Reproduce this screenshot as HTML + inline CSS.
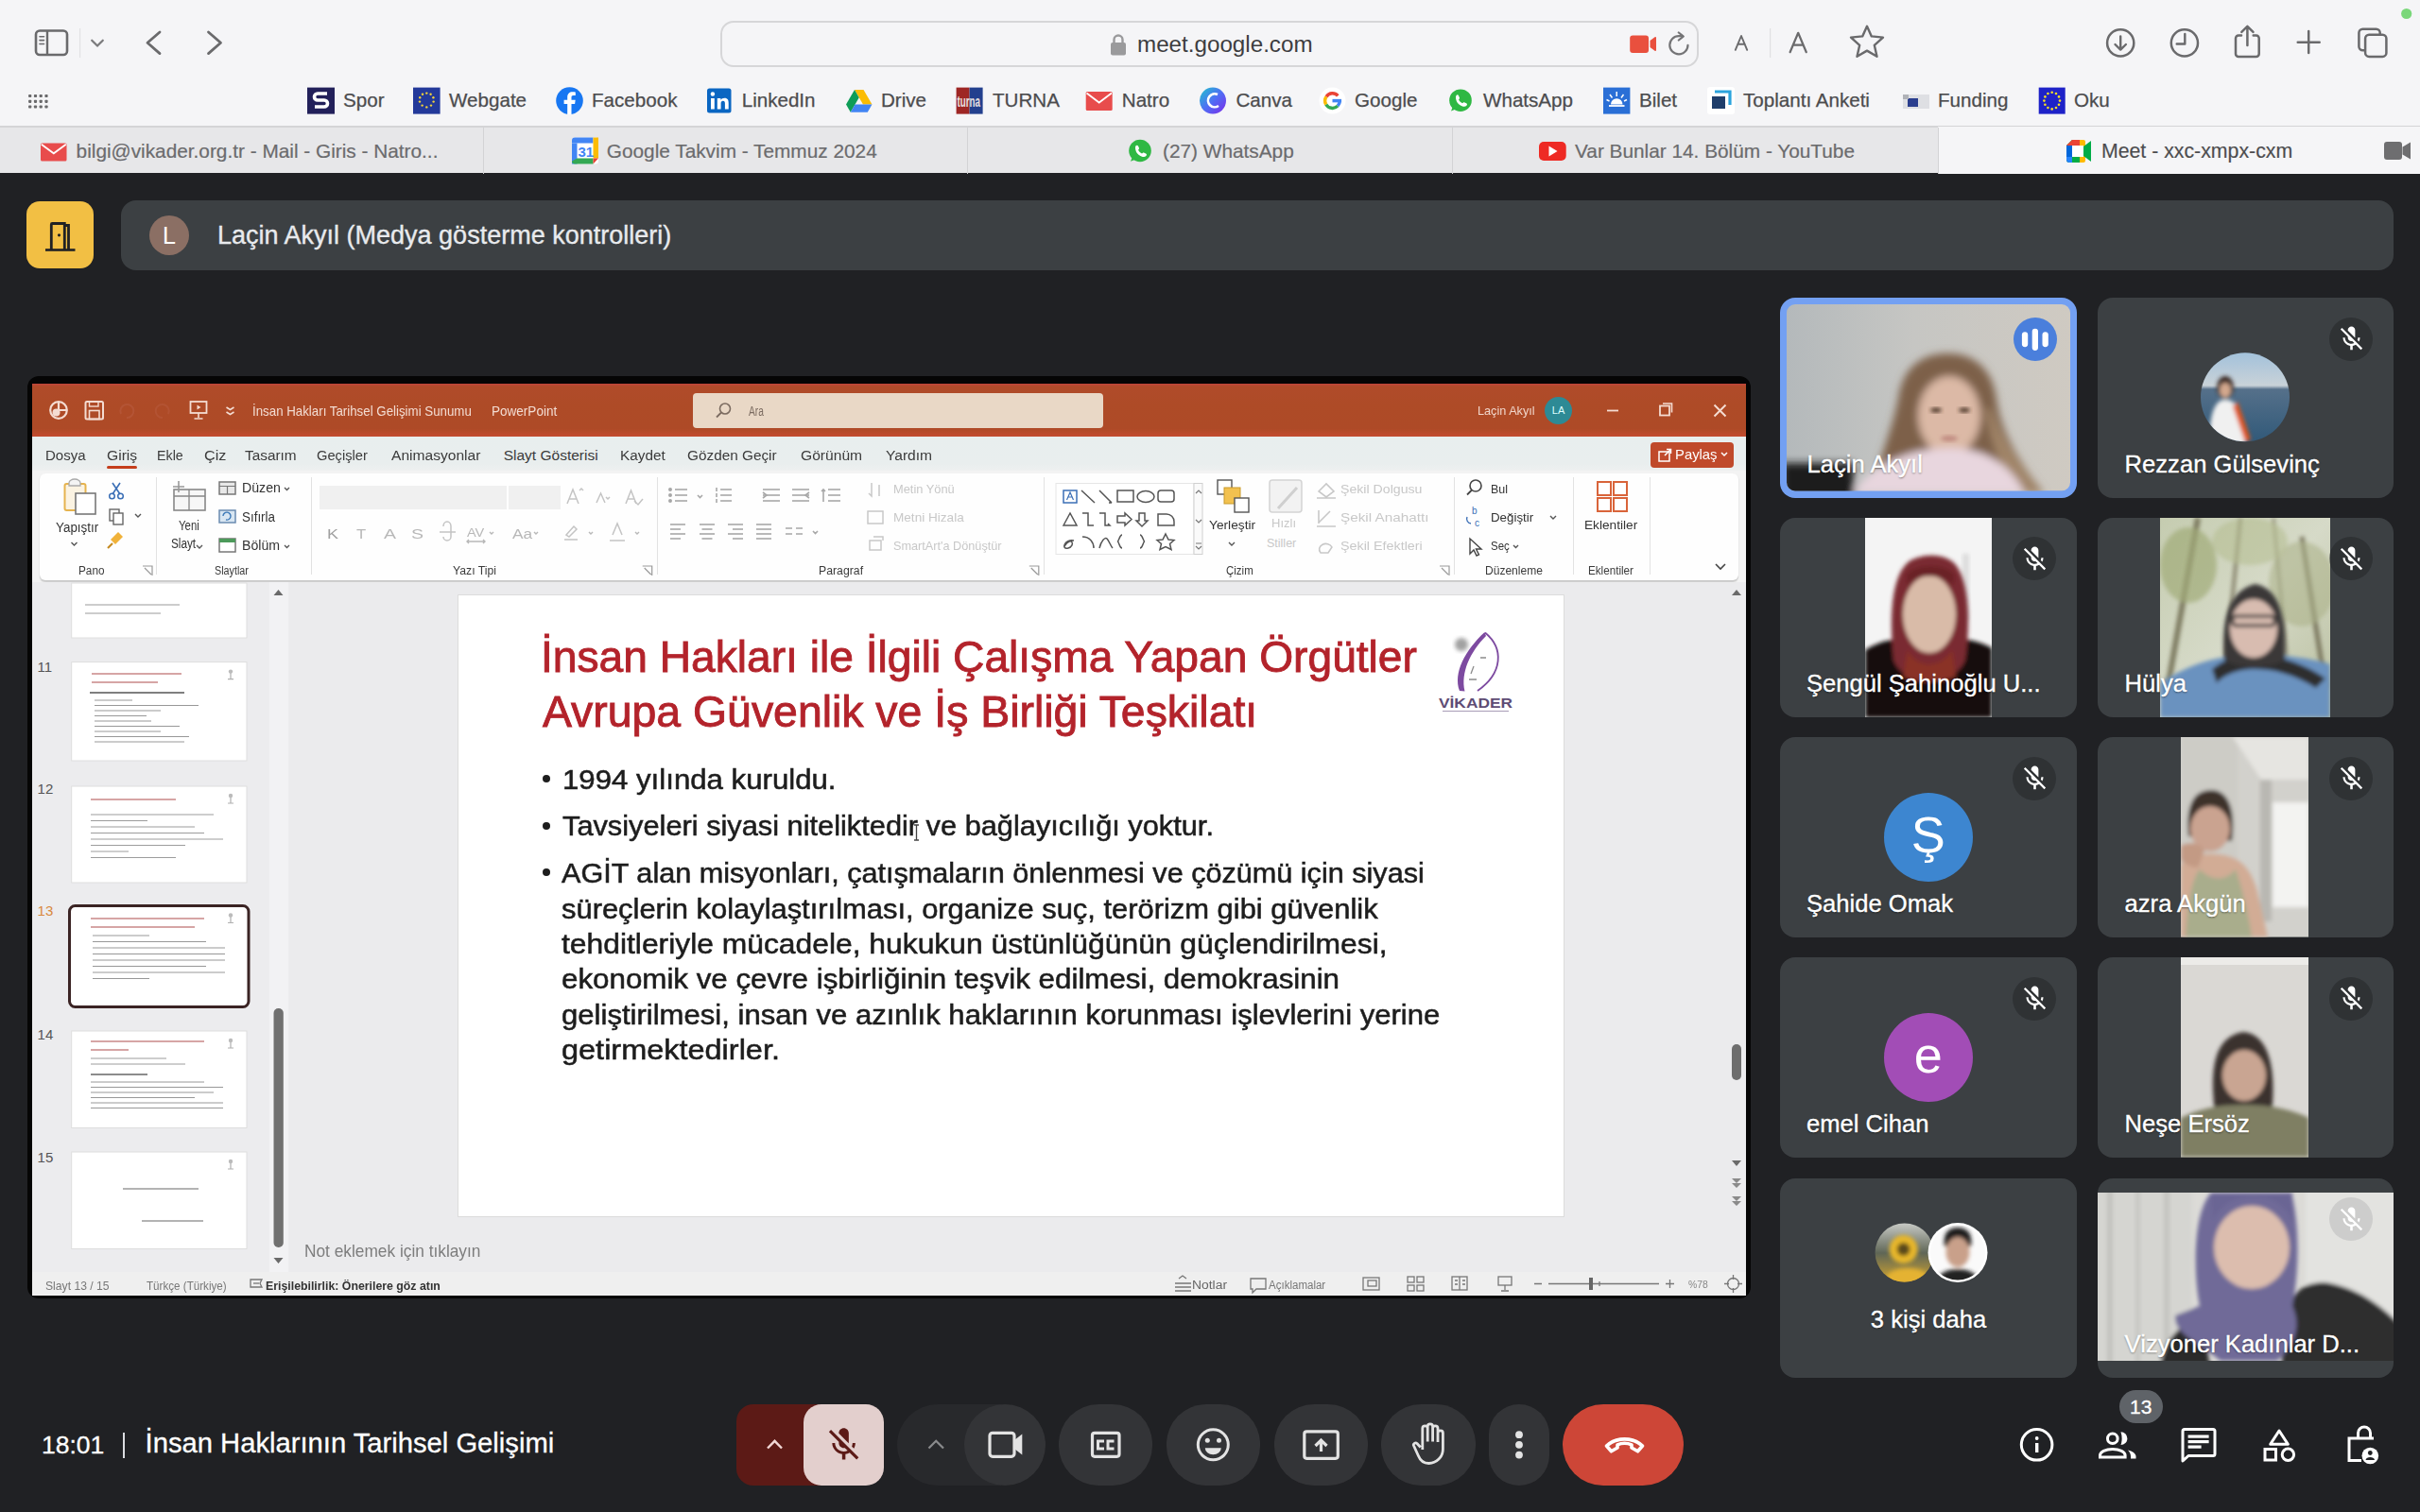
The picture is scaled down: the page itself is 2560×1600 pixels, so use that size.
<!DOCTYPE html>
<html><head><meta charset="utf-8">
<style>
*{box-sizing:border-box;margin:0;padding:0}
html,body{width:2560px;height:1600px;overflow:hidden;background:#202124;font-family:"Liberation Sans",sans-serif}
.a{position:absolute}
svg{position:absolute;overflow:visible}
#top{position:absolute;left:0;top:0;width:2560px;height:133px;background:#f5f5f7}
#tabs{position:absolute;left:0;top:133px;width:2560px;height:50px;background:#e7e7e9;border-top:2px solid #d4d4d6}
.tab{position:absolute;top:0;height:50px;color:#6b6b6d;font-size:20.8px;white-space:nowrap;-webkit-text-stroke:.2px #6b6b6d}
.tab span{position:absolute;top:13px}
.bm{position:absolute;top:88px;font-size:20.6px;color:#4c4c4e;white-space:nowrap;-webkit-text-stroke:.25px #4c4c4e}
.ic{position:absolute;top:92px;width:28px;height:28px}
.t{position:absolute;white-space:nowrap;line-height:1;transform-origin:0 0}
.tile{position:absolute;height:211.5px;border-radius:16px;background:#3c4043;overflow:hidden}
.nm{position:absolute;top:163.8px;font-size:25.6px;line-height:1;color:#fff;white-space:nowrap;text-shadow:0 1px 2px rgba(0,0,0,.5);-webkit-text-stroke:.35px #fff}
.mute{position:absolute;width:46px;height:46px;border-radius:50%;background:rgba(32,33,36,.45)}
.av{position:absolute;width:94px;height:94px;border-radius:50%;color:#fff;font-size:54px;line-height:88px;text-align:center}
</style></head><body>
<div id="top">
<!-- sidebar icon -->
<svg style="left:0;top:0" width="300" height="80">
<rect x="38" y="32.5" width="33" height="25.5" rx="4" fill="none" stroke="#6a6a6c" stroke-width="2.6"/>
<line x1="50" y1="33" x2="50" y2="58" stroke="#6a6a6c" stroke-width="2.4"/>
<line x1="42" y1="38.8" x2="46.5" y2="38.8" stroke="#6a6a6c" stroke-width="1.6" stroke-linecap="round"/>
<line x1="42" y1="42.6" x2="46.5" y2="42.6" stroke="#6a6a6c" stroke-width="1.6" stroke-linecap="round"/>
<line x1="42" y1="46.5" x2="46.5" y2="46.5" stroke="#6a6a6c" stroke-width="1.6" stroke-linecap="round"/>
<line x1="84.6" y1="30" x2="84.6" y2="61" stroke="#e2e2e4" stroke-width="1.2"/>
<polyline points="97.2,42.7 103,48.6 108.8,42.7" fill="none" stroke="#7a7a7c" stroke-width="2.2" stroke-linecap="round" stroke-linejoin="round"/>
<polyline points="169,34 156,45.3 169,56.6" fill="none" stroke="#6a6a6c" stroke-width="2.8" stroke-linecap="round" stroke-linejoin="round"/>
<polyline points="220.5,34 233.5,45.3 220.5,56.6" fill="none" stroke="#6a6a6c" stroke-width="2.8" stroke-linecap="round" stroke-linejoin="round"/>
</svg>
<!-- url bar -->
<div class="a" style="left:762px;top:21.5px;width:1035px;height:49px;border:2px solid #d6d6d8;border-radius:14px;background:#f5f5f7"></div>
<svg style="left:0;top:0" width="10" height="10">
<path d="M1178.5 46 v-4 a4.5 4.5 0 0 1 9 0 v4" fill="none" stroke="#9a9a9c" stroke-width="2.4"/>
<rect x="1175" y="45" width="16" height="13.5" rx="2" fill="#9a9a9c"/>
</svg>
<div class="a" style="left:1203px;top:35px;font-size:24.2px;line-height:1;color:#3d3d3f;white-space:nowrap">meet.google.com</div>
<svg style="left:0;top:0" width="10" height="10">
<rect x="1724.2" y="37.5" width="19.8" height="18.5" rx="3" fill="#e9503e"/>
<path d="M1745.5 43 l5 -3.8 a1 1 0 0 1 1.5 .8 v13 a1 1 0 0 1 -1.5 .8 l-5 -3.8z" fill="#e9503e"/>
<path d="M1785.5 47.8 a9.6 9.6 0 1 1 -9.6 -9.6 h4" fill="none" stroke="#747476" stroke-width="2.2" stroke-linecap="round"/>
<path d="M1775.8 34.5 l5 4 -5 4" fill="none" stroke="#747476" stroke-width="2.2" stroke-linecap="round" stroke-linejoin="round"/>
<line x1="1872.6" y1="30" x2="1872.6" y2="61" stroke="#e0e0e2" stroke-width="1.2"/>
<path d="M1958 39.6 l12.2 -1.2 4.8 -10.6 4.8 10.6 12.2 1.2 -9.2 8.2 2.7 12 -10.5 -6.2 -10.5 6.2 2.7 -12z" fill="none" stroke="#6a6a6c" stroke-width="2.4" stroke-linejoin="round"/>
<circle cx="2243.2" cy="45.4" r="14.1" fill="none" stroke="#6a6a6c" stroke-width="2.5"/>
<path d="M2243.2 38.5 v14 M2237.5 47 l5.7 5.6 5.7 -5.6" fill="none" stroke="#6a6a6c" stroke-width="2.4" stroke-linecap="round" stroke-linejoin="round"/>
<circle cx="2310.9" cy="45.4" r="14.1" fill="none" stroke="#6a6a6c" stroke-width="2.5"/>
<path d="M2311.3 36 v10.5 h-8.6" fill="none" stroke="#6a6a6c" stroke-width="2.4" stroke-linecap="round" stroke-linejoin="round"/>
<path d="M2371 37.5 h-3 a3 3 0 0 0 -3 3 v16.4 a3 3 0 0 0 3 3 h18.7 a3 3 0 0 0 3 -3 v-16.4 a3 3 0 0 0 -3 -3 h-3" fill="none" stroke="#6a6a6c" stroke-width="2.5" stroke-linecap="round"/>
<path d="M2377.4 48 v-20 M2371.3 33.8 l6.1 -6 6.1 6" fill="none" stroke="#6a6a6c" stroke-width="2.5" stroke-linecap="round" stroke-linejoin="round"/>
<path d="M2442.2 33 v23 M2430.7 44.8 h23" stroke="#6a6a6c" stroke-width="2.5" stroke-linecap="round"/>
<rect x="2495.4" y="30.8" width="22.3" height="22.4" rx="4" fill="none" stroke="#6a6a6c" stroke-width="2.5"/>
<rect x="2502.1" y="36.8" width="22.3" height="23.1" rx="4" fill="#f5f5f7" stroke="#6a6a6c" stroke-width="2.5"/>
<circle cx="2545.7" cy="14.5" r="5.6" fill="#7ad77a"/>
<path d="M1835.8 52.8 l6.2 -14.8 6.2 14.8 M1838.2 46.8 h7.6" fill="none" stroke="#6a6a6c" stroke-width="1.9" stroke-linecap="round" stroke-linejoin="round"/>
<path d="M1893.6 55.2 l8.6 -20.4 8.6 20.4 M1896.8 47.6 h10.8" fill="none" stroke="#6a6a6c" stroke-width="2.2" stroke-linecap="round" stroke-linejoin="round"/>
</svg>
<!-- bookmarks grid icon -->
<svg style="left:0;top:0" width="10" height="10" fill="#6a6a6c"><rect x="30.099999999999998" y="99.9" width="3.2" height="3.2" rx=".8"/><rect x="35.9" y="99.9" width="3.2" height="3.2" rx=".8"/><rect x="41.6" y="99.9" width="3.2" height="3.2" rx=".8"/><rect x="47.4" y="99.9" width="3.2" height="3.2" rx=".8"/><rect x="30.099999999999998" y="105.7" width="3.2" height="3.2" rx=".8"/><rect x="35.9" y="105.7" width="3.2" height="3.2" rx=".8"/><rect x="41.6" y="105.7" width="3.2" height="3.2" rx=".8"/><rect x="47.4" y="105.7" width="3.2" height="3.2" rx=".8"/><rect x="30.099999999999998" y="111.4" width="3.2" height="3.2" rx=".8"/><rect x="35.9" y="111.4" width="3.2" height="3.2" rx=".8"/><rect x="41.6" y="111.4" width="3.2" height="3.2" rx=".8"/><rect x="47.4" y="111.4" width="3.2" height="3.2" rx=".8"/></svg>
<div class="bm" style="left:363px;top:95.8px;line-height:1">Spor</div>
<div class="bm" style="left:475px;top:95.8px;line-height:1">Webgate</div>
<div class="bm" style="left:626px;top:95.8px;line-height:1">Facebook</div>
<div class="bm" style="left:784.7px;top:95.8px;line-height:1">LinkedIn</div>
<div class="bm" style="left:932px;top:95.8px;line-height:1">Drive</div>
<div class="bm" style="left:1050px;top:95.8px;line-height:1">TURNA</div>
<div class="bm" style="left:1186.8px;top:95.8px;line-height:1">Natro</div>
<div class="bm" style="left:1307.5px;top:95.8px;line-height:1">Canva</div>
<div class="bm" style="left:1433px;top:95.8px;line-height:1">Google</div>
<div class="bm" style="left:1569px;top:95.8px;line-height:1">WhatsApp</div>
<div class="bm" style="left:1734px;top:95.8px;line-height:1">Bilet</div>
<div class="bm" style="left:1844px;top:95.8px;line-height:1">Toplantı Anketi</div>
<div class="bm" style="left:2050px;top:95.8px;line-height:1">Funding</div>
<div class="bm" style="left:2194px;top:95.8px;line-height:1">Oku</div>
<svg style="left:0;top:0" width="10" height="10">
<!-- Spor -->
<rect x="325" y="92.6" width="29" height="28" fill="#22205a"/>
<path d="M346 99 h-10 a3.5 3.5 0 0 0 0 7 h7 a3.5 3.5 0 0 1 0 7 h-10" fill="none" stroke="#fff" stroke-width="3.6"/>
<!-- Webgate -->
<rect x="437" y="92.6" width="28.6" height="28" fill="#23399a"/>
<g fill="#f3d33a"><circle cx="451.3" cy="98.6" r="1.2"/><circle cx="455.6" cy="99.8" r="1.2"/><circle cx="458.4" cy="103.3" r="1.2"/><circle cx="458.6" cy="107.6" r="1.2"/><circle cx="456" cy="111.6" r="1.2"/><circle cx="451.3" cy="113.4" r="1.2"/><circle cx="446.6" cy="111.6" r="1.2"/><circle cx="444" cy="107.6" r="1.2"/><circle cx="444.2" cy="103.3" r="1.2"/><circle cx="447" cy="99.8" r="1.2"/></g>
<!-- Facebook -->
<circle cx="602.5" cy="106.6" r="14.3" fill="#1877f2"/>
<path d="M604.5 121 v-11 h3.6 l.6 -4.2 h-4.2 v-2.7 c0 -1.2 .4 -2 2.1 -2 h2.2 v-3.7 c-.4 0 -1.7 -.2 -3.2 -.2 -3.2 0 -5.4 2 -5.4 5.6 v3 h-3.6 v4.2 h3.6 v11z" fill="#fff"/>
<!-- LinkedIn -->
<rect x="748" y="93.5" width="25.5" height="26" rx="2.5" fill="#0a66c2"/>
<rect x="752" y="104" width="3.8" height="11.5" fill="#fff"/><circle cx="753.9" cy="99.5" r="2.2" fill="#fff"/>
<path d="M758.8 104 h3.6 v1.7 c.7 -1.2 2.2 -2 4 -2 3.6 0 4.3 2.4 4.3 5.3 v6.5 h-3.8 v-5.8 c0 -1.4 -.2 -2.9 -2 -2.9 -1.9 0 -2.3 1.4 -2.3 2.9 v5.8 h-3.8z" fill="#fff"/>
<!-- Drive -->
<path d="M904 95 h9.5 l9 15.5 h-9.5z" fill="#fbbc04"/>
<path d="M904 95 l4.75 8.2 -9 15.5 -4.75 -8.2z" fill="#0f9d58"/>
<path d="M899.75 118.7 l4.75 -8.2 h18 l-4.75 8.2z" fill="#4285f4"/>
<!-- TURNA -->
<rect x="1011.6" y="92.6" width="14" height="28" fill="#9e2624"/><rect x="1025.6" y="92.6" width="14" height="28" fill="#23408e"/>
<text x="1012.5" y="113" font-size="13" fill="#e8e0e0" font-family="Liberation Sans" font-weight="bold" transform="translate(1012.5 113) scale(.75 1.3) translate(-1012.5 -113)">turna</text>
<!-- Natro mail -->
<rect x="1148.7" y="97" width="28" height="20" rx="1.5" fill="#e84c4c"/>
<path d="M1149.5 98.5 l13.2 10 13.2 -10" fill="none" stroke="#fff" stroke-width="1.8"/>
<!-- Canva -->
<defs><linearGradient id="cg" x1="0" y1="0" x2="1" y2="1"><stop offset="0" stop-color="#20c4cb"/><stop offset=".5" stop-color="#4f6ef5"/><stop offset="1" stop-color="#7d2ae8"/></linearGradient></defs>
<circle cx="1283" cy="106.6" r="14" fill="url(#cg)"/>
<path d="M1288 100 a7 7 0 1 0 1 12" fill="none" stroke="#fff" stroke-width="2.6"/>
<!-- Google -->
<circle cx="1409.5" cy="106.6" r="14" fill="#fff"/>
<path d="M1417.30 106.60 A7.8 7.8 0 0 1 1415.02 112.12" fill="none" stroke="#4285f4" stroke-width="3.5"/><path d="M1415.02 112.12 A7.8 7.8 0 0 1 1402.75 110.50" fill="none" stroke="#34a853" stroke-width="3.5"/><path d="M1402.75 110.50 A7.8 7.8 0 0 1 1403.11 102.13" fill="none" stroke="#fbbc05" stroke-width="3.5"/><path d="M1403.11 102.13 A7.8 7.8 0 0 1 1415.30 101.38" fill="none" stroke="#ea4335" stroke-width="3.5"/><rect x="1409.5" y="104.85" width="9.55" height="3.5" fill="#4285f4"/>
<!-- WhatsApp -->
<circle cx="1545" cy="106.2" r="11.8" fill="#2fb843"/>
<path d="M1535 117.5 l2.2 -5.5 4 3z" fill="#2fb843"/>
<path d="M1540.5 101 c1 -1 2 -.8 2.5 .3 l1 2.2 c.3 .7 -.6 1.4 -.9 1.9 .8 1.6 2.3 3 3.9 3.8 .5 -.3 1.2 -1.2 1.9 -.9 l2.2 1 c1.1 .5 1.2 1.5 .3 2.5 -2.7 2.7 -8.8 -.8 -10.6 -4.9 -.8 -1.9 -1.2 -4.6 -.3 -5.9z" fill="#fff"/>
<!-- Bilet -->
<rect x="1696" y="92.6" width="28.4" height="28" fill="#2a6fd6"/>
<path d="M1702 112 h16.5" stroke="#fff" stroke-width="1.8"/>
<path d="M1704 110.5 a6 6 0 0 1 12.5 0z" fill="#fff"/>
<g stroke="#fff" stroke-width="1.5"><line x1="1710.2" y1="97" x2="1710.2" y2="102"/><line x1="1703" y1="100" x2="1705.5" y2="103.5"/><line x1="1717.5" y1="100" x2="1715" y2="103.5"/><line x1="1699.5" y1="105.5" x2="1702.5" y2="107"/><line x1="1721" y1="105.5" x2="1718" y2="107"/></g>
<!-- Toplanti -->
<rect x="1806" y="92" width="29" height="29" rx="3" fill="#fff"/>
<rect x="1811" y="102" width="14" height="13" fill="#1f3e6b"/>
<path d="M1814 97 h16 v14" fill="none" stroke="#2ba3dd" stroke-width="3.2"/>
<!-- Funding -->
<rect x="2013" y="100" width="28" height="15" fill="#dedfe3"/>
<rect x="2018" y="104" width="11" height="9" fill="#2b3e8e"/>
<rect x="2013" y="100" width="6" height="5" fill="#b0b2b8"/>
<!-- Oku -->
<rect x="2156.7" y="92.6" width="28" height="28" fill="#1e22c8"/>
<g fill="#f6e026"><circle cx="2170.7" cy="97.8" r="1.3"/><circle cx="2175" cy="99" r="1.3"/><circle cx="2178" cy="102.4" r="1.3"/><circle cx="2179" cy="106.6" r="1.3"/><circle cx="2178" cy="110.8" r="1.3"/><circle cx="2175" cy="114" r="1.3"/><circle cx="2170.7" cy="115.4" r="1.3"/><circle cx="2166.4" cy="114" r="1.3"/><circle cx="2163.4" cy="110.8" r="1.3"/><circle cx="2162.4" cy="106.6" r="1.3"/><circle cx="2163.4" cy="102.4" r="1.3"/><circle cx="2166.4" cy="99" r="1.3"/></g>
</svg>
</div>
<div id="tabs">
<div class="a" style="left:2050px;top:-1.5px;width:510px;height:50px;background:#f5f5f7"></div>
<div class="a" style="left:511px;top:0;width:1.2px;height:49px;background:#d3d3d5"></div>
<div class="a" style="left:1022.7px;top:0;width:1.2px;height:49px;background:#d3d3d5"></div>
<div class="a" style="left:1535.5px;top:0;width:1.2px;height:49px;background:#d3d3d5"></div>
<div class="a" style="left:2049.8px;top:0;width:1.2px;height:49px;background:#d3d3d5"></div>
<div class="tab" style="left:80.6px"><span style="top:15px;line-height:1">bilgi@vikader.org.tr - Mail - Giris - Natro...</span></div>
<div class="tab" style="left:641.8px"><span style="top:15px;line-height:1">Google Takvim - Temmuz 2024</span></div>
<div class="tab" style="left:1230px"><span style="top:15px;line-height:1">(27) WhatsApp</span></div>
<div class="tab" style="left:1666px"><span style="top:15px;line-height:1">Var Bunlar 14. Bölüm - YouTube</span></div>
<div class="tab" style="left:2222.9px;color:#4a4a4c;font-size:21.3px"><span style="top:15px;line-height:1">Meet - xxc-xmpx-cxm</span></div>
<svg style="left:0;top:-133px" width="10" height="10">
<rect x="43" y="149.4" width="27.5" height="19" rx="1.5" fill="#e84c4c"/>
<path d="M43.8 150.8 l13 9.5 13 -9.5" fill="none" stroke="#fff" stroke-width="1.8"/>
<rect x="605" y="143.5" width="28" height="28" rx="3" fill="#fff"/>
<path d="M605 146.5 a3 3 0 0 1 3 -3 h19.5 v6 h-22.5z" fill="#4285f4"/>
<rect x="627.5" y="143.5" width="5.5" height="22" fill="#fbbc04"/>
<rect x="605" y="149.5" width="5.5" height="22" fill="#4285f4"/>
<path d="M610.5 165.5 h17 v6 h-19.5 a3 3 0 0 1 -3 -3z" fill="#34a853"/>
<path d="M627.5 165.5 h5.5 l-5.5 6z" fill="#ea4335"/>
<text x="611.5" y="164" font-size="15" font-weight="bold" fill="#4285f4" font-family="Liberation Sans">31</text>
<circle cx="1206" cy="157.5" r="11.8" fill="#2fb843"/>
<path d="M1196 168.8 l2.2 -5.5 4 3z" fill="#2fb843"/>
<path d="M1201.5 152.3 c1 -1 2 -.8 2.5 .3 l1 2.2 c.3 .7 -.6 1.4 -.9 1.9 .8 1.6 2.3 3 3.9 3.8 .5 -.3 1.2 -1.2 1.9 -.9 l2.2 1 c1.1 .5 1.2 1.5 .3 2.5 -2.7 2.7 -8.8 -.8 -10.6 -4.9 -.8 -1.9 -1.2 -4.6 -.3 -5.9z" fill="#fff"/>
<rect x="1628" y="148" width="28.7" height="20" rx="5" fill="#ee2a24"/>
<path d="M1638.5 152.5 v11 l9 -5.5z" fill="#fff"/>
<!-- meet icon -->
<path d="M2186 152 l6 -6 h12 v24 h-15 a3 3 0 0 1 -3 -3z" fill="#00832d"/>
<path d="M2186 152 h6 v12 h-6z" fill="#0066da"/>
<path d="M2192 146 h12 v6 h-12z" fill="#ea4335"/>
<path d="M2192 146 v6 h-6z" fill="#ea4335"/>
<path d="M2186 164 h6 v6 h-3 a3 3 0 0 1 -3 -3z" fill="#2684fc"/>
<path d="M2192 164 h12 v6 h-12z" fill="#00ac47"/>
<path d="M2204 146 h-4 v24 h4 a2 2 0 0 0 2 -2 v-20 a2 2 0 0 0 -2 -2z" fill="#ffba00"/>
<path d="M2204 153 l8 -6 v22 l-8 -6z" fill="#00ac47"/>
<rect x="2192" y="152" width="12" height="12" fill="#fff"/>
<!-- camera -->
<rect x="2522" y="148" width="19" height="19" rx="3" fill="#6e6e70"/>
<path d="M2541.5 153.5 l8.5 -5 v18 l-8.5 -5z" fill="#6e6e70"/>
</svg>
</div>
<div id="meet">
<!-- header -->
<div class="a" style="left:28.4px;top:213px;width:70.6px;height:71px;border-radius:14px;background:#f2bf44"></div>
<svg style="left:0;top:0" width="10" height="10">
<path d="M48 264.5 h31.5" stroke="#202124" stroke-width="2.6"/>
<path d="M54.3 264.5 v-27 a1 1 0 0 1 1 -1 h13 v28" fill="none" stroke="#202124" stroke-width="2.8"/>
<path d="M68.3 238.5 h4.2 v26" fill="none" stroke="#202124" stroke-width="2.8"/>
<circle cx="62.5" cy="248.8" r="1.6" fill="#202124"/>
</svg>
<div class="a" style="left:128px;top:211.5px;width:2404px;height:74.5px;border-radius:16px;background:#3c4043"></div>
<div class="a" style="left:158px;top:227.7px;width:42px;height:42px;border-radius:50%;background:#8b6f64;color:#fff;font-size:25px;line-height:42px;text-align:center">L</div>
<div class="a" style="left:230px;top:235.7px;font-size:27px;line-height:1;color:#e8eaed;white-space:nowrap;-webkit-text-stroke:.35px #e8eaed">Laçin Akyıl (Medya gösterme kontrolleri)</div>
<!-- share frame -->
<div class="a" style="left:29px;top:398px;width:1823px;height:976px;border-radius:12px;background:#050505"></div>
<div id="ppt" class="a" style="left:34px;top:406px;width:1813px;height:965px;background:#e9e9ea;overflow:hidden">
<div class="a" style="left:0;top:0;width:1813px;height:56px;background:linear-gradient(#c2453b 0,#b04b2a 3px,#ae4b27 40%,#ae4a27 85%,#c34b30 100%)"></div>
<div class="a" style="left:0;top:56px;width:1813px;height:36px;background:linear-gradient(#e8eeee,#e9eeee 80%,#eef0f0)"></div>
<div class="a" style="left:0;top:92px;width:1813px;height:118px;background:#f3f3f3"></div>
<div class="a" style="left:8px;top:95px;width:1797px;height:113px;background:#fefefe;border-radius:6px;box-shadow:0 1.5px 1.5px rgba(0,0,0,.18)"></div>
<div class="a" style="left:0;top:210px;width:1813px;height:730px;background:#ebebed"></div>
<div class="a" style="left:0;top:210px;width:272px;height:730px;background:#ececee"></div>
<div class="a" style="left:251px;top:210px;width:20px;height:730px;background:#f2f2f4"></div>
<div class="a" style="left:0;top:940px;width:1813px;height:25px;background:#efefef"></div>
<div class="a" style="left:450px;top:223px;width:1171px;height:659px;background:#fff;border:1px solid #dcdcdc"></div>
<div class="t" style="left:233px;top:21.73px;font-size:14.5px;color:#f3dcd2;transform:scaleX(0.9170);">İnsan Hakları Tarihsel Gelişimi Sunumu</div>
<div class="t" style="left:486px;top:21.73px;font-size:14.5px;color:#f3dcd2;transform:scaleX(0.9333);">PowerPoint</div>
<div class="a" style="left:699px;top:10px;width:434px;height:37px;background:#e9d8c6;border-radius:4px"></div>
<div class="t" style="left:758px;top:22.15px;font-size:14px;color:#7b6b60;transform:scaleX(0.7273);">Ara</div>
<div class="t" style="left:1528.5px;top:22.00px;font-size:13px;color:#f0d5ca;transform:scaleX(0.9758);">Laçin Akyıl</div>
<div class="a" style="left:1600px;top:14px;width:29px;height:29px;border-radius:50%;background:#2d8a95;color:#dff;font-size:11px;line-height:29px;text-align:center">LA</div>
<div class="t" style="left:14.4px;top:67.88px;font-size:15.5px;color:#3b3b3b;transform:scaleX(0.9682);">Dosya</div>
<div class="t" style="left:78.7px;top:67.88px;font-size:15.5px;color:#3b3b3b;transform:scaleX(1.0094);">Giriş</div>
<div class="t" style="left:131.5px;top:67.88px;font-size:15.5px;color:#3b3b3b;transform:scaleX(0.9194);">Ekle</div>
<div class="t" style="left:182px;top:67.88px;font-size:15.5px;color:#3b3b3b;transform:scaleX(1.0435);">Çiz</div>
<div class="t" style="left:225px;top:67.88px;font-size:15.5px;color:#3b3b3b;transform:scaleX(0.9909);">Tasarım</div>
<div class="t" style="left:301px;top:67.88px;font-size:15.5px;color:#3b3b3b;transform:scaleX(0.9483);">Geçişler</div>
<div class="t" style="left:379.5px;top:67.88px;font-size:15.5px;color:#3b3b3b;transform:scaleX(1.0053);">Animasyonlar</div>
<div class="t" style="left:498.7px;top:67.88px;font-size:15.5px;color:#3b3b3b;transform:scaleX(1.0000);">Slayt Gösterisi</div>
<div class="t" style="left:621.6px;top:67.88px;font-size:15.5px;color:#3b3b3b;transform:scaleX(0.9878);">Kaydet</div>
<div class="t" style="left:693px;top:67.88px;font-size:15.5px;color:#3b3b3b;transform:scaleX(0.9897);">Gözden Geçir</div>
<div class="t" style="left:812.5px;top:67.88px;font-size:15.5px;color:#3b3b3b;transform:scaleX(1.0077);">Görünüm</div>
<div class="t" style="left:902.7px;top:67.88px;font-size:15.5px;color:#3b3b3b;transform:scaleX(1.0061);">Yardım</div>
<div class="a" style="left:79px;top:86.5px;width:32px;height:3px;background:#c43e1c;border-radius:2px"></div>
<div class="a" style="left:1712px;top:62px;width:88px;height:26.5px;background:#c04a2b;border-radius:4px"></div>
<div class="t" style="left:1738px;top:67.73px;font-size:14.5px;color:#fff;transform:scaleX(1.0227);">Paylaş</div>
<div class="t" style="left:49.3px;top:192.42px;font-size:12.5px;color:#3a3a3a;transform:scaleX(0.9414);">Pano</div>
<div class="t" style="left:193px;top:192.42px;font-size:12.5px;color:#3a3a3a;transform:scaleX(0.8605);">Slaytlar</div>
<div class="t" style="left:444.8px;top:192.42px;font-size:12.5px;color:#3a3a3a;transform:scaleX(0.9766);">Yazı Tipi</div>
<div class="t" style="left:831.5px;top:192.42px;font-size:12.5px;color:#3a3a3a;transform:scaleX(0.9813);">Paragraf</div>
<div class="t" style="left:1263px;top:192.42px;font-size:12.5px;color:#3a3a3a;transform:scaleX(0.9194);">Çizim</div>
<div class="t" style="left:1536.6px;top:192.42px;font-size:12.5px;color:#3a3a3a;transform:scaleX(0.9635);">Düzenleme</div>
<div class="t" style="left:1646px;top:192.42px;font-size:12.5px;color:#3a3a3a;transform:scaleX(0.9327);">Eklentiler</div>
<div class="a" style="left:131px;top:99px;width:1px;height:103px;background:#e2e2e2"></div>
<div class="a" style="left:295px;top:99px;width:1px;height:103px;background:#e2e2e2"></div>
<div class="a" style="left:660.5px;top:99px;width:1px;height:103px;background:#e2e2e2"></div>
<div class="a" style="left:1069.5px;top:99px;width:1px;height:103px;background:#e2e2e2"></div>
<div class="a" style="left:1504px;top:99px;width:1px;height:103px;background:#e2e2e2"></div>
<div class="a" style="left:1629.7px;top:99px;width:1px;height:103px;background:#e2e2e2"></div>
<div class="a" style="left:1710.7px;top:99px;width:1px;height:103px;background:#e2e2e2"></div>
<div class="t" style="left:24.5px;top:145.15px;font-size:14px;color:#333;transform:scaleX(0.9563);">Yapıştır</div>
<div class="t" style="left:155px;top:143.15px;font-size:14px;color:#333;transform:scaleX(0.8148);">Yeni</div>
<div class="t" style="left:147px;top:162.15px;font-size:14px;color:#333;transform:scaleX(0.8387);">Slayt</div>
<div class="t" style="left:221.6px;top:103.15px;font-size:14px;color:#333;transform:scaleX(1.0100);">Düzen</div>
<div class="t" style="left:221.6px;top:134.15px;font-size:14px;color:#333;transform:scaleX(0.9568);">Sıfırla</div>
<div class="t" style="left:221.6px;top:164.15px;font-size:14px;color:#333;transform:scaleX(1.0100);">Bölüm</div>
<div class="t" style="left:910.8px;top:105.00px;font-size:13px;color:#c8c8c8;transform:scaleX(0.9879);">Metin Yönü</div>
<div class="t" style="left:910.8px;top:135.00px;font-size:13px;color:#c8c8c8;transform:scaleX(1.0444);">Metni Hizala</div>
<div class="t" style="left:910.8px;top:165.00px;font-size:13px;color:#c8c8c8;transform:scaleX(0.9763);">SmartArt'a Dönüştür</div>
<div class="t" style="left:1245px;top:142.57px;font-size:13.5px;color:#333;transform:scaleX(1.0163);">Yerleştir</div>
<div class="t" style="left:1311px;top:142.42px;font-size:12.5px;color:#c8c8c8;transform:scaleX(1.0400);">Hızlı</div>
<div class="t" style="left:1306px;top:163.42px;font-size:12.5px;color:#c8c8c8;transform:scaleX(1.0000);">Stiller</div>
<div class="t" style="left:1384px;top:105.00px;font-size:13px;color:#c8c8c8;transform:scaleX(1.0875);">Şekil Dolgusu</div>
<div class="t" style="left:1384px;top:135.00px;font-size:13px;color:#c8c8c8;transform:scaleX(1.1750);">Şekil Anahattı</div>
<div class="t" style="left:1384px;top:165.00px;font-size:13px;color:#c8c8c8;transform:scaleX(1.1013);">Şekil Efektleri</div>
<div class="t" style="left:1542.6px;top:104.57px;font-size:13.5px;color:#333;transform:scaleX(0.9200);">Bul</div>
<div class="t" style="left:1542.6px;top:134.57px;font-size:13.5px;color:#333;transform:scaleX(0.9870);">Değiştir</div>
<div class="t" style="left:1542.6px;top:164.57px;font-size:13.5px;color:#333;transform:scaleX(0.8500);">Seç</div>
<div class="t" style="left:1641.9px;top:142.57px;font-size:13.5px;color:#333;transform:scaleX(1.0125);">Eklentiler</div>
<div class="t" style="left:312px;top:151.30px;font-size:15px;color:#a0a0a0;transform:scaleX(1.2000);">K</div>
<div class="t" style="left:343px;top:151.30px;font-size:15px;color:#b8b8b8;transform:scaleX(1.1111);">T</div>
<div class="t" style="left:372px;top:151.30px;font-size:15px;color:#b8b8b8;transform:scaleX(1.3000);">A</div>
<div class="t" style="left:401px;top:151.30px;font-size:15px;color:#b8b8b8;transform:scaleX(1.3000);">S</div>
<div class="t" style="left:460px;top:151.00px;font-size:13px;color:#b8b8b8;transform:scaleX(1.1176);">AV</div>
<div class="t" style="left:508px;top:152.15px;font-size:14px;color:#b8b8b8;transform:scaleX(1.2353);">Aa</div>
<div class="a" style="left:303.5px;top:108px;width:198px;height:25px;background:#f0f0f0"></div>
<div class="a" style="left:504px;top:108px;width:55px;height:25px;background:#f0f0f0"></div>
<div class="t" style="left:288px;top:909.34px;font-size:18.5px;color:#7d7d7d;transform:scaleX(0.9347);">Not eklemek için tıklayın</div>
<div class="t" style="left:13.7px;top:948.00px;font-size:13px;color:#777;transform:scaleX(0.9347);">Slayt 13 / 15</div>
<div class="t" style="left:121px;top:948.00px;font-size:13px;color:#777;transform:scaleX(0.8947);">Türkçe (Türkiye)</div>
<div class="t" style="left:247px;top:948.00px;font-size:13px;color:#333;transform:scaleX(0.9477);font-weight:bold;">Erişilebilirlik: Önerilere göz atın</div>
<div class="t" style="left:1227px;top:947.84px;font-size:12px;color:#666;transform:scaleX(1.1562);">Notlar</div>
<div class="t" style="left:1308px;top:947.84px;font-size:12px;color:#777;transform:scaleX(0.9603);">Açıklamalar</div>
<div class="t" style="left:1752px;top:948.27px;font-size:11.5px;color:#888;transform:scaleX(0.9042);">%78</div>
<div class="t" style="left:538px;top:265.21px;font-size:47px;color:#b3232b;transform:scaleX(0.9820);-webkit-text-stroke:.9px #b3232b">İnsan Hakları ile İlgili Çalışma Yapan Örgütler</div>
<div class="t" style="left:540px;top:322.51px;font-size:47px;color:#b3232b;transform:scaleX(0.9869);-webkit-text-stroke:.9px #b3232b">Avrupa Güvenlik ve İş Birliği Teşkilatı</div>
<div class="t" style="left:561px;top:404.21px;font-size:30px;color:#1d1d1d;transform:scaleX(1.0394);-webkit-text-stroke:.55px #1d1d1d">1994 yılında kuruldu.</div>
<div class="t" style="left:561px;top:453.40px;font-size:30px;color:#1d1d1d;transform:scaleX(1.0253);-webkit-text-stroke:.55px #1d1d1d">Tavsiyeleri siyasi niteliktedir ve bağlayıcılığı yoktur.</div>
<div class="t" style="left:560px;top:502.61px;font-size:30px;color:#1d1d1d;transform:scaleX(1.0201);-webkit-text-stroke:.55px #1d1d1d">AGİT alan misyonları, çatışmaların önlenmesi ve çözümü için siyasi</div>
<div class="t" style="left:560px;top:540.61px;font-size:30px;color:#1d1d1d;transform:scaleX(1.0298);-webkit-text-stroke:.55px #1d1d1d">süreçlerin kolaylaştırılması, organize suç, terörizm gibi güvenlik</div>
<div class="t" style="left:560px;top:578.00px;font-size:30px;color:#1d1d1d;transform:scaleX(1.0604);-webkit-text-stroke:.55px #1d1d1d">tehditleriyle mücadele, hukukun üstünlüğünün güçlendirilmesi,</div>
<div class="t" style="left:560px;top:615.40px;font-size:30px;color:#1d1d1d;transform:scaleX(1.0436);-webkit-text-stroke:.55px #1d1d1d">ekonomik ve çevre işbirliğinin teşvik edilmesi, demokrasinin</div>
<div class="t" style="left:560px;top:652.81px;font-size:30px;color:#1d1d1d;transform:scaleX(1.0360);-webkit-text-stroke:.55px #1d1d1d">geliştirilmesi, insan ve azınlık haklarının korunması işlevlerini yerine</div>
<div class="t" style="left:560px;top:690.01px;font-size:30px;color:#1d1d1d;transform:scaleX(1.0822);-webkit-text-stroke:.55px #1d1d1d">getirmektedirler.</div>
<div class="a" style="left:540.3px;top:414.3px;width:8px;height:8px;border-radius:50%;background:#1d1d1d"></div>
<div class="a" style="left:540.3px;top:463.5px;width:8px;height:8px;border-radius:50%;background:#1d1d1d"></div>
<div class="a" style="left:540.3px;top:512.7px;width:8px;height:8px;border-radius:50%;background:#1d1d1d"></div>
<svg style="left:0;top:0" width="1813" height="965"><g transform="translate(-34 -406)">
<circle cx="62" cy="434" r="8.8" fill="none" stroke="#f4dcd2" stroke-width="2.2"/><path d="M62 425.5 v8.5 h8.5" fill="none" stroke="#f4dcd2" stroke-width="2.2"/><circle cx="59.5" cy="436.5" r="4" fill="#f4dcd2"/>
<rect x="90.5" y="425" width="18.5" height="18.5" rx="1.5" fill="none" stroke="#f4dcd2" stroke-width="2"/><rect x="94.5" y="434.5" width="10.5" height="9" fill="none" stroke="#f4dcd2" stroke-width="1.6"/><rect x="94.5" y="425" width="9.5" height="5" fill="none" stroke="#f4dcd2" stroke-width="1.4"/>
<path d="M128 438 a7 7 0 1 1 6 4" fill="none" stroke="#c0684f" stroke-width="2" opacity=".35"/><path d="M178 438 a7 7 0 1 0 -6 4" fill="none" stroke="#c0684f" stroke-width="2" opacity=".3"/>
<rect x="201.5" y="425" width="17" height="12" fill="none" stroke="#f4dcd2" stroke-width="1.8"/><path d="M208.5 428.5 l4 2.5 -4 2.5z" fill="#f4dcd2"/><path d="M210 437 v5 M205.5 443 h9" stroke="#f4dcd2" stroke-width="1.6"/>
<path d="M239.5 431 l4 2.5 4 -2.5 M239.5 436 l4 2.5 4 -2.5" fill="none" stroke="#f4dcd2" stroke-width="1.6"/>
<path d="M1700 434.5 h12" stroke="#f4dcd2" stroke-width="1.8"/>
<rect x="1756" y="429.5" width="10" height="10" fill="none" stroke="#f4dcd2" stroke-width="1.8"/><path d="M1759 427 h9.5 v9.5" fill="none" stroke="#f4dcd2" stroke-width="1.6"/>
<path d="M1813.5 428.5 l12 12 M1825.5 428.5 l-12 12" stroke="#f4dcd2" stroke-width="2"/>
<circle cx="767" cy="432.5" r="5.5" fill="none" stroke="#7b6b60" stroke-width="1.6"/><path d="M763 436.5 l-5 5" stroke="#7b6b60" stroke-width="1.8"/>
<rect x="1755" y="478" width="11" height="10" fill="none" stroke="#fff" stroke-width="1.5"/><path d="M1761 482 l6 -6 M1763 475.5 h4.5 v4.5" fill="none" stroke="#fff" stroke-width="1.5"/><path d="M1821 479 l3 3 3 -3" fill="none" stroke="#fff" stroke-width="1.5"/>
<rect x="68.5" y="512" width="22" height="28" rx="2" fill="#fbf3e2" stroke="#e6b34e" stroke-width="2"/><path d="M73 514 v-3 a6 4 0 0 1 12 0 v3z" fill="#f4f4f4" stroke="#aaa" stroke-width="1.3"/><rect x="80" y="522" width="21" height="22" fill="#fff" stroke="#777" stroke-width="1.6"/>
<path d="M75.5 574 l3 3 3 -3" fill="none" stroke="#555" stroke-width="1.4"/>
<path d="M119 511 l8 12 M127 511 l-8 12" stroke="#3b6fb6" stroke-width="1.6"/><circle cx="118.5" cy="525" r="2.8" fill="none" stroke="#3b6fb6" stroke-width="1.5"/><circle cx="127.5" cy="525" r="2.8" fill="none" stroke="#3b6fb6" stroke-width="1.5"/>
<rect x="116" y="539" width="10" height="12" fill="#fff" stroke="#666" stroke-width="1.4"/><rect x="120" y="543" width="10" height="12" fill="#fff" stroke="#666" stroke-width="1.4"/><path d="M143 544 l3 3 3 -3" fill="none" stroke="#555" stroke-width="1.4"/>
<path d="M117 571 l8 -8 5 5 -8 8z" fill="#f0b23a"/><path d="M114 580 l5 -5" stroke="#c58a20" stroke-width="2.2"/>
<rect x="184" y="518" width="33" height="22" fill="#f7f7f7" stroke="#888" stroke-width="1.6"/><path d="M200 518 v22 M184 525 h33" stroke="#888" stroke-width="1.3"/><path d="M189 509 v12 M183 515 h12" stroke="#999" stroke-width="1.6"/>
<path d="M208 577 l3 3 3 -3" fill="none" stroke="#555" stroke-width="1.4"/>
<rect x="232" y="510" width="17" height="13" fill="#e8e8e8" stroke="#777" stroke-width="1.5"/><path d="M232 514.5 h17 M240.5 514.5 v8.5" stroke="#777" stroke-width="1.2"/>
<rect x="232" y="540" width="17" height="13" fill="#d8e6f2" stroke="#6a8bb0" stroke-width="1.5"/><path d="M236 546 a4 4 0 1 1 3 4" fill="none" stroke="#3d7ab8" stroke-width="1.4"/>
<rect x="232" y="570" width="17" height="14" fill="#fff" stroke="#777" stroke-width="1.5"/><rect x="232" y="570" width="17" height="4" fill="#4c9a5a"/>
<path d="M301 516 l2.5 2.5 2.5 -2.5 M301 577 l2.5 2.5 2.5 -2.5" fill="none" stroke="#555" stroke-width="1.3"/>
<g fill="none" stroke="#c4c4c4" stroke-width="1.5"><path d="M600 533 l6 -15 6 15 M602.5 528 h7 M613 519 l2 -2 2 2"/><path d="M631 532 l4.5 -10 4.5 10 M641 526 l2 2 2 -2"/><path d="M662 533 l5.5 -14 5.5 14 M664 528 h7"/><path d="M671 530 l4 4 5 -6"/>
<path d="M465 563 h17 M469 557 a4 5 0 0 1 8 0 v11 M469 568 a4 4 0 0 0 8 0"/><path d="M597 571 h14 M599 566 l8 -9 3 3 -8 8z"/><path d="M645 572 h16 M648 566 l5 -12 5 12"/></g>
<g fill="none" stroke="#b8b8b8" stroke-width="1.4"><path d="M518 563 l2 2 2 -2 M565 563 l2 2 2 -2 M623 563 l2 2 2 -2 M672 563 l2 2 2 -2"/><path d="M494 573 h19 M496 571 l-2 2 2 2 M511 571 l2 2 -2 2"/></g>
<g stroke="#a8a8a8" stroke-width="1.6" fill="none">
<circle cx="709" cy="518" r="1.2" fill="#a8a8a8"/><path d="M714 518 h13"/>
<path d="M762 518 h12"/><path d="M807 518 h18"/><path d="M838 518 h18"/><path d="M876 518 h13"/>
<circle cx="709" cy="524" r="1.2" fill="#a8a8a8"/><path d="M714 524 h13"/>
<path d="M762 524 h12"/><path d="M807 524 h18"/><path d="M838 524 h18"/><path d="M876 524 h13"/>
<circle cx="709" cy="530" r="1.2" fill="#a8a8a8"/><path d="M714 530 h13"/>
<path d="M762 530 h12"/><path d="M807 530 h18"/><path d="M838 530 h18"/><path d="M876 530 h13"/>
<path d="M738 524 l2.5 2.5 2.5 -2.5"/><path d="M758 516 v4 M758 522 v4 M758 528 v4"/><path d="M807 521 l4 3 -4 3 M856 521 l-4 3 4 3 M871 518 v13 M869 520 l2 -2 2 2"/>
<path d="M709 555 h16"/>
<path d="M709 560 h11"/>
<path d="M709 565 h16"/>
<path d="M709 570 h11"/>
<path d="M740.0 555 h16"/>
<path d="M742.5 560 h11"/>
<path d="M740.0 565 h16"/>
<path d="M742.5 570 h11"/>
<path d="M770 555 h16"/>
<path d="M775 560 h11"/>
<path d="M770 565 h16"/>
<path d="M775 570 h11"/>
<path d="M800 555 h16"/>
<path d="M800 560 h16"/>
<path d="M800 565 h16"/>
<path d="M800 570 h16"/>
<path d="M831 559 h7 M831 565 h7 M842 559 h7 M842 565 h7 M860 562 l2.5 2.5 2.5 -2.5"/>
</g>
<g stroke="#c8c8c8" stroke-width="1.5" fill="none"><path d="M922 511 v14 l-3 -3 M930 513 v12"/><rect x="918" y="541" width="16" height="13"/><path d="M920 572 h12 v10 h-12z M924 568 h10 v4"/></g>
<rect x="1117" y="511.5" width="146" height="75" fill="#fff" stroke="#e6e6e6"/>
<rect x="1263" y="511.5" width="9" height="75" fill="#fafafa" stroke="#d0d0d0" stroke-width="1"/>
<g fill="none" stroke="#555" stroke-width="1.5">
<rect x="1125" y="519" width="14" height="13" stroke="#3b6fb6"/><path d="M1128.5 529 l3.5 -8 3.5 8 M1130 526 h4" stroke="#3b6fb6" stroke-width="1.2"/>
<path d="M1144 519 l14 13 M1163 519 l13 13 M1176 532 l-3 0"/><rect x="1182" y="519" width="17" height="12"/><ellipse cx="1212" cy="525.5" rx="9" ry="6"/><rect x="1225" y="519" width="17" height="12" rx="3"/>
<path d="M1125 556 l7 -13 7 13z M1145 543 h6 v13 h6 M1163 543 h6 v13 h5 l-2 -2 M1182 546 h8 v-3 l7 6.5 -7 6.5 v-3 h-8z M1205 543 h6 v8 h3 l-6 6 -6 -6 h3z M1225 556 v-12 h9 a8 8 0 0 1 8 8 v4z"/>
<path d="M1126 578 c8 -12 12 0 4 2 c-8 2 -4 -10 6 -8 M1145 568 c8 0 12 6 12 12 M1163 580 c2 -8 6 -12 8 -10 c2 2 4 8 6 10 M1187 566 c-3 0 -3 7 -5 7 c2 0 2 7 5 7 M1206 566 c3 0 3 7 5 7 c-2 0 -2 7 -5 7 M1233 565 l3 6 6 .5 -4.5 4 1.5 6 -6 -3 -6 3 1.5 -6 -4.5 -4 6 -.5z"/>
<path d="M1265 522 l3 -3 3 3 M1265 550 l3 3 3 -3 M1265 575 h6 M1265 578 l3 3 3 -3" stroke="#777" stroke-width="1.2"/>
</g>
<rect x="1288" y="508" width="15" height="15" fill="#fff" stroke="#555" stroke-width="1.4"/><rect x="1295" y="516" width="17" height="17" fill="#f2c14f" stroke="#c99a2a" stroke-width="1"/><rect x="1306" y="527" width="15" height="15" fill="#fff" stroke="#555" stroke-width="1.4"/><path d="M1300 574 l3 3 3 -3" fill="none" stroke="#555" stroke-width="1.4"/>
<rect x="1343" y="508" width="34" height="34" rx="3" fill="#f2f2f2" stroke="#d4d4d4" stroke-width="1.5"/><path d="M1352 538 l20 -22" stroke="#cfcfcf" stroke-width="3"/>
<g fill="none" stroke="#c8c8c8" stroke-width="1.6"><path d="M1395 520 l8 -8 8 8 -8 6z M1393 527 h20"/><path d="M1395 553 l12 -12 M1393 557 h20 M1395 540 v14"/><path d="M1397 585 a7 6 0 1 1 12 -6 l-4 6z"/></g>
<circle cx="1561" cy="514" r="6" fill="none" stroke="#444" stroke-width="1.6"/><path d="M1557 518.5 l-5 5" stroke="#444" stroke-width="1.8"/>
<text x="1557" y="544" font-size="10" fill="#3b6fb6" font-family="Liberation Sans">b</text><path d="M1552 547 a5 5 0 0 0 4 7" fill="none" stroke="#3b6fb6" stroke-width="1.4"/><text x="1560" y="557" font-size="10" fill="#3b6fb6" font-family="Liberation Sans">c</text><path d="M1640 546 l3 3 3 -3" fill="none" stroke="#555" stroke-width="1.4"/>
<path d="M1555 570 v16 l4 -4 3 6 2.5 -1 -3 -6 h5.5z" fill="none" stroke="#444" stroke-width="1.4"/><path d="M1601 577 l2.5 2.5 2.5 -2.5" fill="none" stroke="#555" stroke-width="1.4"/>
<g fill="#fff" stroke="#d9643a" stroke-width="2"><rect x="1690" y="510" width="14" height="14"/><rect x="1707" y="510" width="14" height="14"/><rect x="1690" y="527" width="14" height="14"/><rect x="1707" y="527" width="14" height="14"/></g>
<path d="M1815 597 l5 5 5 -5" fill="none" stroke="#444" stroke-width="1.6"/>
<path d="M151 599 h10 v10 M153 601 l7 7" fill="none" stroke="#9a9a9a" stroke-width="1.2"/>
<path d="M679.7 599 h10 v10 M681.7 601 l7 7" fill="none" stroke="#9a9a9a" stroke-width="1.2"/>
<path d="M1088.8 599 h10 v10 M1090.8 601 l7 7" fill="none" stroke="#9a9a9a" stroke-width="1.2"/>
<path d="M1523 599 h10 v10 M1525 601 l7 7" fill="none" stroke="#9a9a9a" stroke-width="1.2"/>
<rect x="75.7" y="617" width="185.3" height="58" fill="#fff" stroke="#dedede" stroke-width="1"/>
<rect x="75.7" y="700.6" width="185.3" height="104.39999999999998" fill="#fff" stroke="#dedede" stroke-width="1"/>
<path d="M244 710.6 v8 M241 718.6 h6" stroke="#b0b0b0" stroke-width="1.2"/><circle cx="244" cy="710.6" r="2.2" fill="#bbb"/>
<rect x="75.7" y="832" width="185.3" height="102" fill="#fff" stroke="#dedede" stroke-width="1"/>
<path d="M244 842 v8 M241 850 h6" stroke="#b0b0b0" stroke-width="1.2"/><circle cx="244" cy="842" r="2.2" fill="#bbb"/>
<rect x="73.5" y="958.5" width="189.5" height="107.0" rx="6" fill="#fff" stroke="#3b2424" stroke-width="3"/>
<path d="M244 968.5 v8 M241 976.5 h6" stroke="#b0b0b0" stroke-width="1.2"/><circle cx="244" cy="968.5" r="2.2" fill="#bbb"/>
<rect x="75.7" y="1091" width="185.3" height="102.5" fill="#fff" stroke="#dedede" stroke-width="1"/>
<path d="M244 1101 v8 M241 1109 h6" stroke="#b0b0b0" stroke-width="1.2"/><circle cx="244" cy="1101" r="2.2" fill="#bbb"/>
<rect x="75.7" y="1219" width="185.3" height="102.5" fill="#fff" stroke="#dedede" stroke-width="1"/>
<path d="M244 1229 v8 M241 1237 h6" stroke="#b0b0b0" stroke-width="1.2"/><circle cx="244" cy="1229" r="2.2" fill="#bbb"/>
<path d="M90 640 h100" stroke="#9a9a9a" stroke-width="1"/>
<path d="M90 649 h80" stroke="#9a9a9a" stroke-width="1"/>
<path d="M97 713 h95" stroke="#c98787" stroke-width="1.5"/>
<path d="M97 722 h70" stroke="#c98787" stroke-width="1.5"/>
<path d="M95 733 h100" stroke="#555" stroke-width="1.5"/>
<path d="M100 741.0 h40" stroke="#989898" stroke-width="1"/>
<path d="M100 746.5 h110" stroke="#989898" stroke-width="1"/>
<path d="M100 752.0 h70" stroke="#989898" stroke-width="1"/>
<path d="M100 757.5 h55" stroke="#989898" stroke-width="1"/>
<path d="M100 763.0 h60" stroke="#989898" stroke-width="1"/>
<path d="M100 768.5 h90" stroke="#989898" stroke-width="1"/>
<path d="M100 774.0 h70" stroke="#989898" stroke-width="1"/>
<path d="M100 779.5 h100" stroke="#989898" stroke-width="1"/>
<path d="M100 785.0 h95" stroke="#989898" stroke-width="1"/>
<path d="M96 846 h90" stroke="#c98787" stroke-width="1.6"/>
<path d="M96 862.0 h130" stroke="#9c9c9c" stroke-width="1"/>
<path d="M96 868.5 h60" stroke="#9c9c9c" stroke-width="1"/>
<path d="M96 875.0 h110" stroke="#9c9c9c" stroke-width="1"/>
<path d="M96 881.5 h120" stroke="#9c9c9c" stroke-width="1"/>
<path d="M96 888.0 h140" stroke="#9c9c9c" stroke-width="1"/>
<path d="M96 894.5 h100" stroke="#9c9c9c" stroke-width="1"/>
<path d="M96 901.0 h40" stroke="#9c9c9c" stroke-width="1"/>
<path d="M96 907.5 h90" stroke="#9c9c9c" stroke-width="1"/>
<path d="M96 972 h120" stroke="#c98787" stroke-width="1.6"/>
<path d="M96 981 h110" stroke="#c98787" stroke-width="1.6"/>
<path d="M98 990.0 h60" stroke="#989898" stroke-width="1"/>
<path d="M98 996.5 h120" stroke="#989898" stroke-width="1"/>
<path d="M98 1003.0 h140" stroke="#989898" stroke-width="1"/>
<path d="M98 1009.5 h140" stroke="#989898" stroke-width="1"/>
<path d="M98 1016.0 h140" stroke="#989898" stroke-width="1"/>
<path d="M98 1022.5 h120" stroke="#989898" stroke-width="1"/>
<path d="M98 1029.0 h140" stroke="#989898" stroke-width="1"/>
<path d="M98 1035.5 h60" stroke="#989898" stroke-width="1"/>
<path d="M96 1102 h120" stroke="#c98787" stroke-width="1.6"/>
<path d="M96 1111 h40" stroke="#c98787" stroke-width="1.6"/>
<path d="M96 1120 h80" stroke="#9c9c9c" stroke-width="1"/>
<path d="M96 1126 h100" stroke="#9c9c9c" stroke-width="1"/>
<path d="M96 1137 h60" stroke="#666" stroke-width="1.4"/>
<path d="M96 1145.0 h120" stroke="#989898" stroke-width="1"/>
<path d="M96 1150.5 h140" stroke="#989898" stroke-width="1"/>
<path d="M96 1156.0 h130" stroke="#989898" stroke-width="1"/>
<path d="M96 1161.5 h110" stroke="#989898" stroke-width="1"/>
<path d="M96 1167.0 h140" stroke="#989898" stroke-width="1"/>
<path d="M96 1172.5 h140" stroke="#989898" stroke-width="1"/>
<path d="M130 1258 h80" stroke="#9a9a9a" stroke-width="1.4"/>
<path d="M150 1292 h65" stroke="#9a9a9a" stroke-width="1.4"/>
<rect x="289.5" y="1067" width="10.3" height="253" rx="5" fill="#707070"/>
<path d="M289.5 630 l5 -6 5 6z M289.5 1331 h10 l-5 6z" fill="#6a6a6a"/>
<path d="M1832 630 l5 -6 5 6z" fill="#6a6a6a"/>
<rect x="1832" y="1105" width="10" height="38" rx="5" fill="#6e6e6e"/>
<path d="M1832 1228 h10 l-5 6z" fill="#6a6a6a"/><path d="M1832 1247 h10 l-5 5z M1832 1252 h10 l-5 5z M1832 1266 h10 l-5 5z M1832 1271 h10 l-5 5z" fill="#8a8a8a"/>
<path d="M1570.5 669 C1550 688 1537 712 1544 731 L1549.5 731.5 C1545 712 1555 690 1572 673z" fill="#7d4aa0"/>
<path d="M1571 669.5 C1591 686 1590 712 1563 731" fill="none" stroke="#7d4aa0" stroke-width="1.8"/>
<g filter="url(#b2)" opacity=".8"><circle cx="1546" cy="682" r="7" fill="#8a8a8a"/></g>
<path d="M1566 696 h6 M1554 719 h8 M1559 705 l-3 8" stroke="#8c8c8c" stroke-width="1.3" fill="none"/>
<text x="1522" y="748.5" font-family="Liberation Sans" font-weight="bold" font-size="15.5" fill="#5e4c74" textLength="78" lengthAdjust="spacingAndGlyphs">VİKADER</text>
<path d="M1526 752.5 h70" stroke="#a89cb6" stroke-width="1.2"/>
<path d="M969.5 873 v16 M967 873 h5 M967 889 h5" stroke="#444" stroke-width="1.3"/>
<g fill="none" stroke="#777" stroke-width="1.3"><path d="M265 1354 h12 l-2 4 2 4 h-12z"/><path d="M268 1358 h6"/>
<path d="M1243 1358 h17 M1243 1362 h17 M1243 1366 h17 M1247 1353 l4 -3 4 3"/>
<path d="M1323 1353 h16 v11 h-10 l-4 4 v-4 h-2z"/>
<rect x="1442" y="1352" width="17" height="13"/><rect x="1447" y="1355" width="9" height="6"/>
<rect x="1489" y="1351" width="7" height="6"/><rect x="1499" y="1351" width="7" height="6"/><rect x="1489" y="1360" width="7" height="6"/><rect x="1499" y="1360" width="7" height="6"/>
<rect x="1536" y="1351" width="16" height="14"/><path d="M1544 1351 v14 M1539 1355 h3 M1539 1359 h3 M1547 1355 h3 M1547 1359 h3"/>
<rect x="1585" y="1351" width="14" height="9"/><path d="M1592 1360 v5 M1588 1366 h8"/>
<path d="M1623 1358.5 h8 M1638 1358.5 h117 M1762 1358.5 h9 M1766.5 1354 v9"/>
<rect x="1681" y="1352" width="4" height="13" fill="#666" stroke="none"/><path d="M1692 1356 v5"/>
<circle cx="1833.5" cy="1358.5" r="6"/><path d="M1833.5 1349 v5 M1833.5 1363 v5 M1824 1358.5 h5 M1838 1358.5 h5"/></g>
</g></svg>
<div class="t" style="left:5.600000000000001px;top:291.8px;font-size:15px;color:#555">11</div>
<div class="t" style="left:5.600000000000001px;top:420.8px;font-size:15px;color:#555">12</div>
<div class="t" style="left:5.600000000000001px;top:549.9px;font-size:15px;color:#d9893f">13</div>
<div class="t" style="left:5.600000000000001px;top:680.5px;font-size:15px;color:#555">14</div>
<div class="t" style="left:5.600000000000001px;top:810.5px;font-size:15px;color:#555">15</div>
</div>
<div id="tiles">
<svg width="0" height="0" style="position:absolute"><defs>
<filter id="b2" x="-20%" y="-20%" width="140%" height="140%"><feGaussianBlur stdDeviation="2"/></filter>
<filter id="b4" x="-20%" y="-20%" width="140%" height="140%"><feGaussianBlur stdDeviation="4"/></filter>
<filter id="b8" x="-30%" y="-30%" width="160%" height="160%"><feGaussianBlur stdDeviation="8"/></filter>
<symbol id="micoff" viewBox="0 0 24 24"><path fill="#fff" d="M19 11h-1.7c0 .74-.16 1.43-.43 2.05l1.23 1.23c.56-.98.9-2.09.9-3.28zm-4.02.17c0-.06.02-.11.02-.17V5c0-1.66-1.34-3-3-3S9 3.34 9 5v.18l5.98 5.99zM4.27 3L3 4.27l6.01 6.01V11c0 1.66 1.33 3 2.99 3 .22 0 .44-.03.65-.08l1.66 1.66c-.71.33-1.5.52-2.31.52-2.76 0-5.3-2.1-5.3-5.1H5c0 3.41 2.72 6.23 6 6.72V21h2v-3.28c.91-.13 1.77-.45 2.54-.9L19.73 21 21 19.73 4.27 3z"/></symbol>
</defs></svg>
<!-- tile 1 Lacin -->
<div class="tile" style="left:1883px;top:315px;width:314px;background:#73a0f2">
<svg style="left:7px;top:7px;overflow:hidden" width="300" height="197.5">
<defs><clipPath id="c1"><rect width="300" height="197.5" rx="9"/></clipPath>
<linearGradient id="g1" x1="0" x2="1"><stop offset="0" stop-color="#b4b9bb"/><stop offset=".45" stop-color="#c6c6c3"/><stop offset="1" stop-color="#cfcac2"/></linearGradient></defs>
<g clip-path="url(#c1)">
<rect width="300" height="197.5" fill="url(#g1)"/>
<g filter="url(#b4)">
<path d="M88 200 C100 160 112 130 118 100 C122 70 140 52 170 52 C200 52 218 70 222 100 C226 130 240 160 272 200z" fill="#7d6048"/>
<path d="M215 110 C230 150 250 170 270 200 L240 200 C225 170 215 140 210 110z" fill="#a08468"/>
<ellipse cx="172" cy="118" rx="33" ry="42" fill="#dcb9a6"/>
<path d="M70 200 C90 170 130 152 172 152 C215 152 240 175 252 200z" fill="#e8d6de"/>
<rect x="-5" y="168" width="76" height="40" fill="#1e1d1c"/>
</g>
<ellipse cx="158" cy="112" rx="6" ry="2.5" fill="#4a3428" filter="url(#b2)"/>
<ellipse cx="188" cy="112" rx="6" ry="2.5" fill="#4a3428" filter="url(#b2)"/>
<ellipse cx="172" cy="142" rx="9" ry="3" fill="#c08a80" filter="url(#b2)"/>
</g>
</svg>
<div class="a" style="left:247px;top:20.9px;width:46px;height:46px;border-radius:50%;background:#4a7fdc"></div>
<svg style="left:0;top:0" width="10" height="10" fill="#fff">
<rect x="255.9" y="36.2" width="6.3" height="16" rx="3.15"/><rect x="266.7" y="32.8" width="6.3" height="23.2" rx="3.15"/><rect x="277.5" y="36.2" width="6.3" height="16" rx="3.15"/>
</svg>
<div class="nm" style="left:28.5px">Laçin Akyıl</div>
</div>
<!-- tile 2 Rezzan -->
<div class="tile" style="left:2218.6px;top:315px;width:313.2px">
<svg style="left:0;top:0" width="313" height="211.5">
<defs><clipPath id="c2"><circle cx="156" cy="105.3" r="47"/></clipPath>
<linearGradient id="g2" x1="0" y1="0" x2="0" y2="1"><stop offset="0" stop-color="#9fc0db"/><stop offset=".38" stop-color="#c9d2d8"/><stop offset=".42" stop-color="#55708a"/><stop offset="1" stop-color="#2f5878"/></linearGradient></defs>
<g clip-path="url(#c2)">
<rect x="100" y="55" width="120" height="100" fill="url(#g2)"/>
<g filter="url(#b2)">
<ellipse cx="135" cy="95" rx="9" ry="12" fill="#3a2a26"/>
<ellipse cx="135" cy="98" rx="6" ry="8" fill="#d3a88e"/>
<path d="M118 155 C118 120 125 108 135 108 C148 108 155 122 156 155z" fill="#f0f0f0"/>
<path d="M148 110 l14 40 -6 3 -13 -38z" fill="#e0561e"/>
</g>
</g>
</svg>
<div class="mute" style="left:245.4px;top:20.5px"></div>
<svg style="left:253px;top:28px" width="31" height="31" viewBox="0 0 24 24"><use href="#micoff"/></svg>
<div class="nm" style="left:29px">Rezzan Gülsevinç</div>
</div>
<!-- tile 3 Sengul -->
<div class="tile" style="left:1883px;top:547.5px;width:314px">
<svg style="left:89.8px;top:0;overflow:hidden" width="134.2" height="211.5">
<rect width="134.2" height="211.5" fill="#f4f4f4"/>
<rect x="103" y="38" width="7" height="70" fill="#dcdcdc" filter="url(#b2)"/>
<g filter="url(#b2)">
<path d="M0 140 C15 130 30 128 45 128 L95 128 C110 128 125 132 134.2 138 V211.5 H0z" fill="#121110"/>
<path d="M30 150 C26 110 26 60 48 45 C62 38 80 38 92 46 C110 60 112 110 106 150 C100 165 88 170 68 170 C48 170 35 165 30 150z" fill="#7a2c30"/>
<ellipse cx="68" cy="102" rx="28" ry="41" fill="#d9bba8"/>
<path d="M44 72 C55 58 82 58 94 72 L94 60 C85 48 55 48 44 60z" fill="#6a2428"/>
<path d="M45 140 C55 160 80 160 92 140 L96 168 C80 175 55 175 40 168z" fill="#8a3126"/>
</g>
</svg>
<div class="mute" style="left:246px;top:20.5px"></div>
<svg style="left:253.5px;top:28px" width="31" height="31" viewBox="0 0 24 24"><use href="#micoff"/></svg>
<div class="nm" style="left:28px">Şengül Şahinoğlu U...</div>
</div>
<!-- tile 4 Hulya -->
<div class="tile" style="left:2218.6px;top:547.5px;width:313.2px">
<svg style="left:66.4px;top:0;overflow:hidden" width="180" height="211.5">
<defs><linearGradient id="g4" x1="0" y1="0" x2="1" y2="1"><stop offset="0" stop-color="#c5ccb0"/><stop offset=".5" stop-color="#d6dac8"/><stop offset="1" stop-color="#b9bf9f"/></linearGradient></defs>
<rect width="180" height="211.5" fill="url(#g4)"/>
<g filter="url(#b2)" opacity=".85">
<path d="M40 0 L8 180" stroke="#6e6a50" stroke-width="6"/>
<path d="M85 0 L70 150" stroke="#7d7860" stroke-width="4"/>
<path d="M150 20 L175 180" stroke="#6d6850" stroke-width="5"/>
<path d="M120 0 L135 160" stroke="#88846c" stroke-width="3"/>
<ellipse cx="30" cy="50" rx="30" ry="40" fill="#9aa56e" opacity=".7"/>
<ellipse cx="150" cy="70" rx="35" ry="45" fill="#a7ae82" opacity=".6"/>
<ellipse cx="95" cy="25" rx="40" ry="25" fill="#b3bb8c" opacity=".6"/>
</g>
<g filter="url(#b2)">
<path d="M0 211.5 V175 C30 155 60 145 100 145 C140 145 165 150 180 155 V211.5z" fill="#6a92bf"/>
<path d="M55 160 C70 148 85 145 100 145 C120 145 150 152 175 170 L165 180 C140 165 120 160 100 160 C80 160 65 168 60 175z" fill="#2e2d2e"/>
<path d="M68 150 C66 120 66 80 100 70 C128 74 134 110 132 150 C120 160 80 160 68 150z" fill="#3a3838"/>
<ellipse cx="99" cy="117" rx="25" ry="31" fill="#d8bcb0"/>
<rect x="77" y="104" width="44" height="10" rx="3" fill="none" stroke="#2a2a2a" stroke-width="3"/>
</g>
</svg>
<div class="mute" style="left:245.4px;top:20.5px"></div>
<svg style="left:253px;top:28px" width="31" height="31" viewBox="0 0 24 24"><use href="#micoff"/></svg>
<div class="nm" style="left:29px">Hülya</div>
</div>
<!-- tile 5 Sahide -->
<div class="tile" style="left:1883px;top:780px;width:314px">
<div class="av" style="left:109.7px;top:59px;background:#3d86d0">Ş</div>
<div class="mute" style="left:246px;top:20.5px"></div>
<svg style="left:253.5px;top:28px" width="31" height="31" viewBox="0 0 24 24"><use href="#micoff"/></svg>
<div class="nm" style="left:28px">Şahide Omak</div>
</div>
<!-- tile 6 azra -->
<div class="tile" style="left:2218.6px;top:780px;width:313.2px">
<svg style="left:88px;top:0;overflow:hidden" width="135.4" height="211.5">
<rect width="135.4" height="211.5" fill="#d2d1cc"/>
<g filter="url(#b2)">
<rect x="0" y="0" width="60" height="211.5" fill="#cdccc6"/>
<path d="M55 0 L135.4 0 V45 H85z" fill="#e6e5e1"/>
<rect x="97" y="69" width="38.4" height="111" fill="#f3f3f1"/>
<rect x="84" y="45" width="12" height="150" fill="#b9b8b2"/>
<path d="M0 211.5 V135 C10 125 25 122 40 124 C60 126 72 135 80 160 L92 211.5z" fill="#d2ac95"/>
<path d="M5 211.5 C8 170 12 150 20 140 C30 150 45 155 58 140 C65 160 72 190 75 211.5z" fill="#a9ad8c"/>
<path d="M8 105 C5 75 12 56 32 56 C52 56 58 80 54 110z" fill="#3c302a"/>
<ellipse cx="31" cy="97" rx="21" ry="24" fill="#caa390"/>
<path d="M0 115 C8 110 20 112 25 120 L18 138 C10 138 2 132 0 130z" fill="#c39a84"/>
</g>
</svg>
<div class="mute" style="left:245.4px;top:20.5px"></div>
<svg style="left:253px;top:28px" width="31" height="31" viewBox="0 0 24 24"><use href="#micoff"/></svg>
<div class="nm" style="left:29px">azra Akgün</div>
</div>
<!-- tile 7 emel -->
<div class="tile" style="left:1883px;top:1013px;width:314px">
<div class="av" style="left:109.7px;top:58.6px;background:#a24db6">e</div>
<div class="mute" style="left:246px;top:20.5px"></div>
<svg style="left:253.5px;top:28px" width="31" height="31" viewBox="0 0 24 24"><use href="#micoff"/></svg>
<div class="nm" style="left:28px">emel Cihan</div>
</div>
<!-- tile 8 Nese -->
<div class="tile" style="left:2218.6px;top:1013px;width:313.2px">
<svg style="left:88px;top:0;overflow:hidden" width="135.4" height="211.5">
<rect width="135.4" height="211.5" fill="#dad8d4"/>
<rect width="135.4" height="8" fill="#ecebe8"/>
<g filter="url(#b2)">
<path d="M36 165 C32 130 30 85 66 79 C98 82 100 130 96 165z" fill="#3a322e"/>
<ellipse cx="67" cy="125" rx="23" ry="27" fill="#c9a592"/>
<path d="M0 211.5 V170 C20 160 40 156 68 156 C95 156 120 162 135.4 170 V211.5z" fill="#7f7f64"/>
</g>
</svg>
<div class="mute" style="left:245.4px;top:20.5px"></div>
<svg style="left:253px;top:28px" width="31" height="31" viewBox="0 0 24 24"><use href="#micoff"/></svg>
<div class="nm" style="left:29px">Neşe Ersöz</div>
</div>
<!-- tile 9 more -->
<div class="tile" style="left:1883px;top:1246.5px;width:314px">
<svg style="left:0;top:0" width="314" height="211.5">
<defs><clipPath id="c9a"><circle cx="131.6" cy="78.5" r="31"/></clipPath><clipPath id="c9b"><circle cx="188" cy="78.5" r="29"/></clipPath>
<linearGradient id="g9" x1="0" y1="0" x2="0" y2="1"><stop offset="0" stop-color="#c9cbc6"/><stop offset=".5" stop-color="#5f6656"/><stop offset="1" stop-color="#d8a82e"/></linearGradient></defs>
<g clip-path="url(#c9a)">
<rect x="100" y="47" width="64" height="64" fill="url(#g9)"/>
<g filter="url(#b2)">
<circle cx="130.6" cy="75" r="15" fill="#e8b72a"/><circle cx="130.6" cy="75" r="7" fill="#5a4a1e"/>
<ellipse cx="135" cy="105" rx="22" ry="10" fill="#e4b230"/></g>
</g>
<circle cx="188" cy="78.5" r="31.5" fill="#fff"/>
<g clip-path="url(#c9b)">
<rect x="155" y="47" width="66" height="64" fill="#fafafa"/>
<g filter="url(#b2)"><path d="M174 72 C172 58 178 52 188 52 C198 52 204 58 202 72z" fill="#1e1b1a"/>
<ellipse cx="188" cy="78" rx="12.5" ry="16" fill="#c9a08a"/>
<path d="M162 112 C168 100 176 96 188 96 C200 96 208 100 214 112z" fill="#222"/></g>
</g>
</svg>
<div class="nm" style="left:0;width:314px;text-align:center;top:137px">3 kişi daha</div>
</div>
<!-- tile 10 Vizyoner -->
<div class="tile" style="left:2218.6px;top:1246.5px;width:313.2px">
<svg style="left:0;top:15.5px;overflow:hidden" width="313.2" height="178">
<rect width="313.2" height="178" fill="#dcdbd7"/>
<g filter="url(#b2)">
<rect x="-10" y="-10" width="110" height="200" fill="#d5d5d1"/>
<rect x="10" y="-10" width="6" height="200" fill="#c2c2be"/><rect x="40" y="-10" width="5" height="200" fill="#c6c6c2"/><rect x="70" y="-10" width="6" height="200" fill="#c4c4c0"/>
<rect x="220" y="-10" width="100" height="200" fill="#e3e3e0"/>
<path d="M65 190 C70 150 90 140 110 130 L120 190z" fill="#2c2b2c"/>
<path d="M195 190 C195 120 205 95 240 95 C275 100 300 120 320 140 V190z" fill="#2f2e2f"/>
<path d="M108 120 C100 80 102 20 120 0 L205 0 C215 40 212 90 206 120 C215 140 210 160 190 178 L130 178 C110 160 80 150 82 130z" fill="#6f6a98"/>
<ellipse cx="163" cy="58" rx="40" ry="44" fill="#dcbdae"/>
<path d="M122 30 C130 10 150 4 165 4 C185 4 200 14 206 32 L206 0 H120z" fill="#6a6594"/>
</g>
</svg>
<div class="mute" style="left:245.4px;top:20.5px;background:rgba(190,190,190,.6)"></div>
<svg style="left:253px;top:28px" width="31" height="31" viewBox="0 0 24 24"><use href="#micoff"/></svg>
<div class="nm" style="left:29px">Vizyoner Kadınlar D...</div>
</div>
</div>
</div>
<div id="controls">
<div class="a" style="left:44px;top:1515.6px;font-size:26.5px;line-height:1;color:#fff;white-space:nowrap;-webkit-text-stroke:.3px #fff">18:01</div>
<div class="a" style="left:130px;top:1515.7px;width:2px;height:27px;background:#dadce0"></div>
<div class="a" style="left:153.6px;top:1513.3px;font-size:29.2px;line-height:1;color:#fff;white-space:nowrap;-webkit-text-stroke:.3px #fff">İnsan Haklarının Tarihsel Gelişimi</div>
<div class="a" style="left:779px;top:1486px;width:110px;height:85.5px;border-radius:18px 0 0 18px;background:#5c1a16"></div>
<div class="a" style="left:849.8px;top:1486px;width:85.2px;height:85.5px;border-radius:19px;background:#e3cfcd"></div>
<div class="a" style="left:949.3px;top:1486px;width:110px;height:85.5px;border-radius:43px 0 0 43px;background:#28292c"></div>
<div class="a" style="left:1020px;top:1486px;width:86px;height:85.5px;border-radius:43px;background:#333437"></div>
<div class="a" style="left:1119.8px;top:1486px;width:99.4px;height:85.5px;border-radius:42px;background:#333437"></div>
<div class="a" style="left:1233.7px;top:1486px;width:99px;height:85.5px;border-radius:42px;background:#333437"></div>
<div class="a" style="left:1347.5px;top:1486px;width:99.5px;height:85.5px;border-radius:42px;background:#333437"></div>
<div class="a" style="left:1461.3px;top:1486px;width:99.3px;height:85.5px;border-radius:42px;background:#333437"></div>
<div class="a" style="left:1575px;top:1486px;width:63.7px;height:85.5px;border-radius:32px;background:#333437"></div>
<div class="a" style="left:1653.2px;top:1486px;width:128.3px;height:85.5px;border-radius:43px;background:#cd4637"></div>
<svg style="left:0;top:0" width="10" height="10">
<polyline points="812,1532.5 819.5,1524.8 827,1532.5" fill="none" stroke="#f2d8d6" stroke-width="2.4"/>
<g transform="translate(871.6 1507.8) scale(1.75)"><path fill="#5c1a16" d="M19 11h-1.7c0 .74-.16 1.43-.43 2.05l1.23 1.23c.56-.98.9-2.09.9-3.28zm-4.02.17c0-.06.02-.11.02-.17V5c0-1.66-1.34-3-3-3S9 3.34 9 5v.18l5.98 5.99zM4.27 3L3 4.27l6.01 6.01V11c0 1.66 1.33 3 2.99 3 .22 0 .44-.03.65-.08l1.66 1.66c-.71.33-1.5.52-2.31.52-2.76 0-5.3-2.1-5.3-5.1H5c0 3.41 2.72 6.23 6 6.72V21h2v-3.28c.91-.13 1.77-.45 2.54-.9L19.73 21 21 19.73 4.27 3z"/></g>
<polyline points="982.5,1532.5 990.2,1524.8 998,1532.5" fill="none" stroke="#8a8b8d" stroke-width="2.2"/>
<rect x="1047" y="1516.3" width="26" height="25" rx="3" fill="none" stroke="#e3e3e3" stroke-width="3.2"/>
<path d="M1073 1524 l8.3 -6.5 v22 l-8.3 -6.5z" fill="#e3e3e3"/>
<rect x="1155.5" y="1516.3" width="28.5" height="25" rx="2.5" fill="none" stroke="#e3e3e3" stroke-width="3.2"/>
<path d="M1168 1525 h-6.5 v8 h6.5 M1178.5 1525 h-6.5 v8 h6.5" fill="none" stroke="#e3e3e3" stroke-width="3"/>
<circle cx="1283.3" cy="1528.8" r="16" fill="none" stroke="#e3e3e3" stroke-width="3"/>
<circle cx="1277.3" cy="1524.3" r="2.5" fill="#e3e3e3"/><circle cx="1289.5" cy="1524.3" r="2.5" fill="#e3e3e3"/>
<path d="M1274.8 1532.3 h17 a8.5 7 0 0 1 -17 0z" fill="#e3e3e3"/>
<rect x="1379.8" y="1514.8" width="35.5" height="28.5" rx="2.5" fill="none" stroke="#e3e3e3" stroke-width="3.2"/>
<path d="M1397.5 1536 v-11 M1391.5 1530 l6 -6 6 6" fill="none" stroke="#e3e3e3" stroke-width="3.2"/>
<g transform="translate(2.8 0)"><path d="M1502 1534 v-22.5 a2.7 2.7 0 0 1 5.4 0 v14 M1507.4 1525.5 v-16 a2.7 2.7 0 0 1 5.4 0 v16 M1512.8 1525.5 v-14 a2.7 2.7 0 0 1 5.4 0 v14 M1518.2 1526 v-9.5 a2.7 2.7 0 0 1 5.4 0 v17 a15 15 0 0 1 -15 15 c-6 0 -9 -3 -11 -8 l-5 -11 c-.6 -1.6 1.8 -3.6 3.6 -2 l3.7 4" fill="none" stroke="#e3e3e3" stroke-width="2.8" stroke-linejoin="round"/></g>
<circle cx="1607" cy="1518.2" r="3.9" fill="#e3e3e3"/><circle cx="1607" cy="1528.8" r="3.9" fill="#e3e3e3"/><circle cx="1607" cy="1539.6" r="3.9" fill="#e3e3e3"/>
<path d="M1699.5 1530 c10 -9.5 28 -9.5 38 0 l-5 5.8 -6.5 -3.8 v-3.2 c-5 -2 -10 -2 -15 0 v3.2 l-6.5 3.8z" fill="none" stroke="#fff" stroke-width="3.6" stroke-linejoin="round"/>
</svg>
<!-- right icons -->
<svg style="left:0;top:0" width="10" height="10">
<circle cx="2154.6" cy="1528.8" r="16.3" fill="none" stroke="#fff" stroke-width="3"/>
<rect x="2153" y="1527" width="3.4" height="10" fill="#fff"/><circle cx="2154.7" cy="1522" r="1.9" fill="#fff"/>
<circle cx="2234.8" cy="1522.3" r="5.3" fill="none" stroke="#fff" stroke-width="3"/>
<path d="M2221.5 1542 v-2 c0 -3.8 6 -6.5 13.3 -6.5 s13.3 2.7 13.3 6.5 v2z" fill="none" stroke="#fff" stroke-width="3"/>
<path d="M2243.5 1515.3 a6.9 6.9 0 0 1 0 13.8 a22 22 0 0 0 0 -13.8z" fill="#fff"/>
<path d="M2251 1534.5 c4.5 1.2 8.5 3.5 8.5 6.5 v2.5 h-5.5 v-2.5 c0 -2.5 -1.2 -4.5 -3 -6.5z" fill="#fff"/>
<path d="M2309 1546 v-31.5 a2 2 0 0 1 2 -2 h30 a2 2 0 0 1 2 2 v24 a2 2 0 0 1 -2 2 h-26z" fill="none" stroke="#fff" stroke-width="3" stroke-linejoin="round"/>
<rect x="2314.6" y="1518.5" width="22" height="3.2" fill="#fff"/><rect x="2314.6" y="1524" width="22" height="3.2" fill="#fff"/><rect x="2314.6" y="1529.5" width="14" height="3.2" fill="#fff"/>
<path d="M2411 1514 l9.3 14.3 h-18.6z" fill="none" stroke="#fff" stroke-width="3" stroke-linejoin="round"/>
<rect x="2396" y="1533.5" width="11.5" height="11.5" fill="none" stroke="#fff" stroke-width="3"/>
<circle cx="2420.4" cy="1539.2" r="6.2" fill="none" stroke="#fff" stroke-width="3"/>
<path d="M2494.5 1521 v-4.5 a6.5 6.5 0 0 1 13 0 v4.5" fill="none" stroke="#fff" stroke-width="3"/>
<path d="M2498 1545.5 h-13 v-23.5 h26" fill="none" stroke="#fff" stroke-width="3"/>
<circle cx="2507.3" cy="1540.5" r="8.8" fill="#fff"/>
<circle cx="2507.3" cy="1537.5" r="2.4" fill="#202124"/>
<path d="M2502.5 1545 a5 4 0 0 1 9.6 0z" fill="#202124"/>
</svg>
<div class="a" style="left:2241.6px;top:1470.5px;width:46.4px;height:35.5px;border-radius:18px;background:#5f6368;color:#fff;font-size:21px;line-height:35.5px;text-align:center;-webkit-text-stroke:.3px #fff">13</div>
</div>
</div>
</body></html>
